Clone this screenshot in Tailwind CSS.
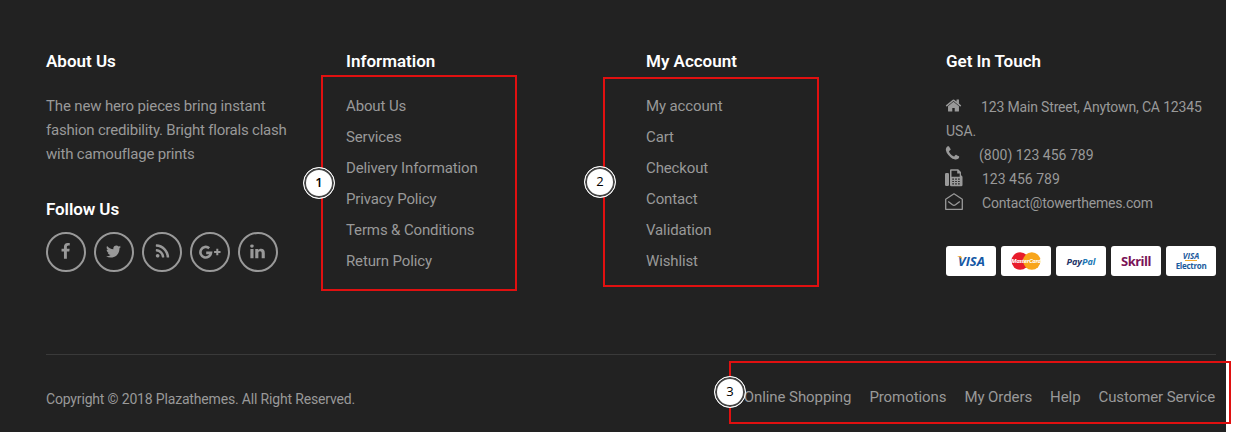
<!DOCTYPE html>
<html lang="en">
<head>
<meta charset="utf-8">
<title>Footer</title>
<script src="https://cdn.jsdelivr.net/npm/@tailwindcss/browser@4"></script>
</head>
<body class="bg-white font-['Roboto',sans-serif] overflow-hidden">
<div class="relative w-[1241px] h-[434px]">
<footer class="w-[1226px] h-[432px] bg-[#222222] text-[#999999] pl-[46px] pr-[10px] pt-[49px] flex flex-col">
  <div class="h-[305px] grid grid-cols-[300px_300px_300px_270px] text-[15px] leading-6">
    <section>
      <h3 class="text-white text-[17px] font-semibold">About Us</h3>
      <p class="mt-[21px] whitespace-nowrap"><span class="tracking-[-0.15px]">The new hero pieces bring instant</span><br><span class="tracking-[-0.21px]">fashion credibility. Bright florals clash</span><br><span class="tracking-[-0.2px]">with camouflage prints</span></p>
      <h3 class="text-white text-[17px] tracking-[-0.1px] font-semibold mt-[31px]">Follow Us</h3>
      <div class="flex gap-2 mt-[11px]">
        <a class="size-10 rounded-full border-2 border-[#999999] flex items-center justify-center"><svg class="size-[17px] -mt-px -ml-px" viewBox="0 0 1792 1792" fill="currentColor"><path d="M1343 12v264h-157q-86 0-116 36t-30 108v189h293l-39 296h-254v759h-306v-759h-255v-296h255v-218q0-186 104-288.5t277-102.5q147 0 228 12z"/></svg></a>
        <a class="size-10 rounded-full border-2 border-[#999999] flex items-center justify-center"><svg class="size-[17px] -ml-px -mt-px" viewBox="0 0 1792 1792" fill="currentColor"><path d="M1684 408q-67 98-162 167 1 14 1 42 0 130-38 259.5t-115.5 248.5-184.5 210.5-258 146-323 54.5q-271 0-496-145 35 4 78 4 225 0 401-138-105-2-188-64.5t-114-159.5q33 5 61 5 43 0 85-11-112-23-185.5-111.5t-73.5-205.5v-4q68 38 146 41-66-44-105-115t-39-154q0-88 44-163 121 149 294.5 238.5t371.5 99.5q-8-38-8-74 0-134 94.5-228.5t228.5-94.5q140 0 236 102 109-21 205-78-37 115-142 178 93-10 186-50z"/></svg></a>
        <a class="size-10 rounded-full border-2 border-[#999999] flex items-center justify-center"><svg class="size-[17px] -mt-px" viewBox="0 0 1792 1792" fill="currentColor"><path d="M576 1344q0 80-56 136t-136 56-136-56-56-136 56-136 136-56 136 56 56 136zm512 123q2 28-17 48-18 21-47 21h-135q-25 0-43-16.5t-20-41.5q-22-229-184.5-391.5t-391.5-184.5q-25-2-41.5-20t-16.5-43v-135q0-29 21-47 17-17 43-17h5q160 13 306 80.5t259 181.5q114 113 181.5 259t80.5 306zm512 2q2 27-18 47-18 20-46 20h-143q-26 0-44.5-17.5t-19.5-42.5q-12-215-101-408.5t-231.5-336-336-231.5-408.5-102q-25-1-42.5-19.5t-17.5-43.5v-143q0-28 20-46 18-18 44-18h3q262 13 501.5 120t425.5 294q187 186 294 425.5t120 501.5z"/></svg></a>
        <a class="size-10 rounded-full border-2 border-[#999999] flex items-center justify-center"><svg class="w-[22px] h-[14px] -mt-px" viewBox="0 0 22 14" fill="none" stroke="currentColor"><path stroke-width="2.6" d="M10.200 3.200A5.300 5.300 0 1 0 12 7.900H7.200"/><path stroke-width="2" d="M18.300 3.800v6.400M15.100 7h6.400"/></svg></a>
        <a class="size-10 rounded-full border-2 border-[#999999] flex items-center justify-center"><svg class="size-[17px] -ml-px -mt-px" viewBox="0 0 1792 1792" fill="currentColor"><path d="M477 625v991h-330v-991h330zm21-306q1 73-50.5 122t-135.5 49h-2q-82 0-132-49t-50-122q0-74 51.5-122.5t134.5-48.5 133 48.5 51 122.500zm1166 729v568h-329v-530q0-105-40.5-164.5t-126.5-59.5q-63 0-105.5 34.5t-63.500 85.500q-11 30-11 81v553h-329q2-399 2-647t-1-296l-1-48h329v144h-2q20-32 41-56t56.500-52 87-43.500 114.500-15.500q171 0 275 113.500t104 332.500z"/></svg></a>
      </div>
    </section>
    <section>
      <h3 class="text-white text-[17px] font-semibold">Information</h3>
      <ul class="mt-[21px] flex flex-col gap-[7px] whitespace-nowrap tracking-[-0.13px]">
        <li><a>About Us</a></li><li><a>Services</a></li><li><a>Delivery Information</a></li><li><a>Privacy Policy</a></li><li><a>Terms &amp; Conditions</a></li><li><a>Return Policy</a></li>
      </ul>
    </section>
    <section>
      <h3 class="text-white text-[17px] font-semibold">My Account</h3>
      <ul class="mt-[21px] flex flex-col gap-[7px] whitespace-nowrap tracking-[-0.13px]">
        <li><a>My account</a></li><li><a>Cart</a></li><li><a>Checkout</a></li><li><a>Contact</a></li><li><a>Validation</a></li><li><a>Wishlist</a></li>
      </ul>
    </section>
    <section>
      <h3 class="text-white text-[17px] font-semibold tracking-[-0.05px]">Get In Touch</h3>
      <div class="mt-[22px] text-[14px] whitespace-nowrap">
        <div class="flex h-6"><span class="w-[35px]"><svg class="size-[17px] -ml-px mt-[2px]" viewBox="0 0 1792 1792" fill="currentColor"><path d="M1472 992v480q0 26-19 45t-45 19h-384v-384h-256v384h-384q-26 0-45-19t-19-45v-480q0-1 .5-3t.5-3l575-474 575 474q1 2 1 6zm223-69l-62 74q-8 9-21 11h-3q-13 0-21-7l-692-577-692 577q-12 8-24 7-13-2-21-11l-62-74q-8-10-7-23.5t11-21.5l719-599q32-26 76-26t76 26l244 204v-195q0-14 9-23t23-9h192q14 0 23 9t9 23v408l219 182q10 8 11 21.5t-7 23.5z"/></svg></span><span class="tracking-[-0.16px]">123 Main Street, Anytown, CA 12345</span></div>
        <div class="h-6">USA.</div>
        <div class="flex h-6"><span class="w-[33px]"><svg class="size-[17px] -ml-[2px] mt-[2px]" viewBox="0 0 1792 1792" fill="currentColor"><path d="M1600 1240q0 27-10 70.5t-21 68.5q-21 50-122 106-94 51-186 51-27 0-53-3.5t-57.5-12.5-47-14.5-55.5-20.5-49-18q-98-35-175-83-127-79-264-216t-216-264q-48-77-83-175-3-9-18-49t-20.5-55.5-14.5-47-12.5-57.5-3.5-53q0-92 51-186 56-101 106-122 25-11 68.5-21t70.5-10q14 0 21 3 18 6 53 76 11 19 30 54t35 63.5 31 53.5q3 4 17.5 25t21.5 35.5 7 28.5q0 20-28.5 50t-62 55-62 53-28.5 46q0 9 5 22.5t8.5 20.5 14 24 11.5 19q76 137 174 235t235 174q2 1 19 11.5t24 14 20.5 8.5 22.5 5q18 0 46-28.5t53-62 55-62 50-28.5q14 0 28.5 7t35.5 21.5 25 17.5q25 15 53.5 31t63.5 35 54 30q70 35 76 53 3 7 3 21z"/></svg></span><span>(800) 123 456 789</span></div>
        <div class="flex h-6"><span class="w-[36px]"><svg class="w-[18px] h-[18px] -ml-px mt-[2px]" viewBox="0 0 18 18" fill="currentColor"><rect y="4" width="4" height="13" rx="1.2"/><path fill-rule="evenodd" d="M5 1.200Q5 .2 6 .2h7.200L16 3v3.200q1.500.4 1.500 1.800v8q0 1.200-1.300 1.200H6.300Q5 17.200 5 16zM6.500 1.700v6h8.200V4.500h-2.500V1.700zM7.300 9.500v1.300h1.600V9.500zm2.900 0v1.300h1.600V9.500zm2.900 0v1.300h1.600V9.500zM7.300 11.900v1.200h1.600v-1.200zm2.900 0v1.200h1.600v-1.200zm2.900 0v1.200h1.600v-1.200zM7.300 14.300v1.200h1.600v-1.200zm2.900 0v1.200h1.600v-1.200zm2.900 0v1.200h1.600v-1.200z"/></svg></span><span>123 456 789</span></div>
        <div class="flex h-6"><span class="w-[36px]"><svg class="w-[18px] h-[18px] -ml-px mt-[2px]" viewBox="0 0 18 18" fill="none" stroke="currentColor" stroke-width="1.300" stroke-linejoin="round"><path d="M.7 6.200 9 .8l8.300 5.400v10.100H.7z"/><path d="m3.200 8.400 4.300 3.400q1.500 1.100 3 0l4.300-3.400"/></svg></span><span class="tracking-[-0.17px]">Contact@towerthemes.com</span></div>
      </div>
      <div class="mt-[31px] grid grid-cols-5 gap-[5px] h-[30px] leading-none">
        <div class="relative bg-white rounded-[3px] flex items-center justify-center text-[#1457a5] text-[13px] leading-5 font-bold italic font-['Open_Sans',sans-serif] pl-px">VISA<svg class="absolute left-[11px] top-[10px] w-[6px] h-[5px]" viewBox="0 0 6 5"><path d="M0 0h4l1.500 4Q3.500 1 0 0z" fill="#f0a830"/></svg></div>
        <div class="relative bg-white rounded-[3px] flex items-center justify-center"><svg class="w-[30px] h-[18px]" viewBox="0 0 30 18"><circle cx="9.200" cy="9" r="8.700" fill="#e81c2c"/><circle cx="20.800" cy="9" r="8.700" fill="#f8a51b"/></svg><span class="absolute inset-0 flex items-center justify-center text-[6px] leading-3 tracking-[-0.4px] italic font-bold text-white font-['Open_Sans',sans-serif]">MasterCard</span></div>
        <div class="bg-white rounded-[3px] flex items-center justify-center text-[9px] font-bold italic font-['Open_Sans',sans-serif] text-[#1e3467]">Pay<span class="text-[#2178b5]">Pal</span></div>
        <div class="bg-white rounded-[3px] flex items-center justify-center text-[13px] tracking-[-0.5px] leading-5 font-bold font-['Open_Sans',sans-serif] text-[#7a1457]">Skrill</div>
        <div class="bg-white rounded-[3px] flex flex-col items-center justify-center text-[8px] font-bold font-['Open_Sans',sans-serif] text-[#1c5b9e]"><span class="italic">VISA</span><span class="h-px w-3 bg-[#f0a830]"></span><span class="tracking-[-0.3px] mt-px">Electron</span></div>
      </div>
    </section>
  </div>
  <div class="border-t border-[#3a3a3a] flex justify-between whitespace-nowrap leading-6">
    <p class="text-[14px] tracking-[-0.17px] mt-8">Copyright © 2018 Plazathemes. All Right Reserved.</p>
    <nav class="mt-[30px] flex gap-[18px] text-[15px] tracking-[-0.08px] pr-px"><a>Online Shopping</a><a>Promotions</a><a>My Orders</a><a>Help</a><a>Customer Service</a></nav>
  </div>
</footer>
<div class="absolute left-[321px] top-[75px] w-[196px] h-[216px] border-2 border-[#e01010]"></div>
<div class="absolute left-[603px] top-[77px] w-[216px] h-[210px] border-2 border-[#e01010]"></div>
<div class="absolute left-[729px] top-[361px] w-[502px] h-[63px] border-2 border-[#e01010]"></div>
<div class="absolute left-[303px] top-[167px] size-[32px] rounded-full bg-white border border-white ring-inset ring-2 ring-[#444] flex items-center justify-center text-black text-[13px] font-semibold font-['Open_Sans',sans-serif]">1</div>
<div class="absolute left-[584px] top-[166px] size-[32px] rounded-full bg-white border border-white ring-inset ring-2 ring-[#444] flex items-center justify-center text-black text-[13px] font-medium font-['Open_Sans',sans-serif]">2</div>
<div class="absolute left-[714px] top-[376px] size-[32px] rounded-full bg-white border border-white ring-inset ring-2 ring-[#444] flex items-center justify-center text-black text-[13px] font-medium font-['Open_Sans',sans-serif]">3</div>
</div>
</body>
</html>
